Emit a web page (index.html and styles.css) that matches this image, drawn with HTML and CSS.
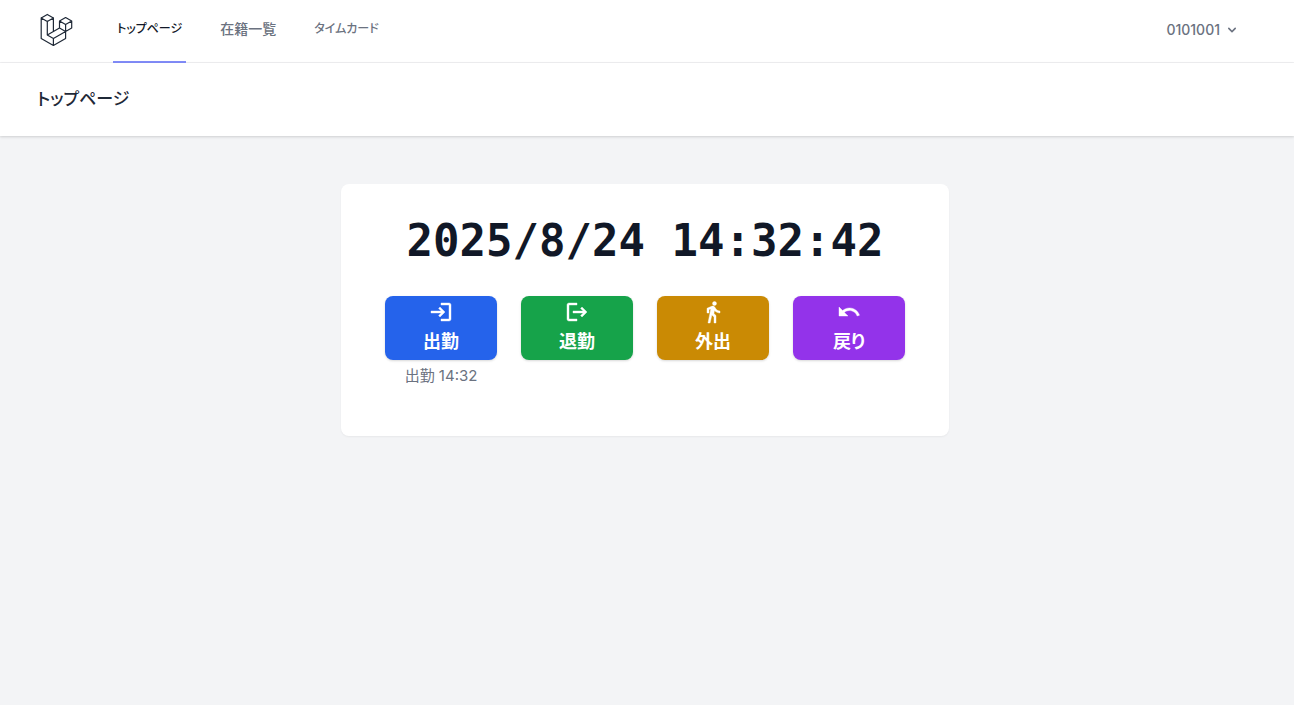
FILE: index.html
```html
<!DOCTYPE html>
<html lang="ja">
<head>
<meta charset="utf-8">
<meta name="viewport" content="width=device-width, initial-scale=1">
<title>トップページ</title>
<link rel="stylesheet" href="styles.css">
</head>
<body class="page">
<nav class="nav">
  <div class="container nav-inner">
    <a class="logo" href="#" aria-label="ホーム">
      <svg class="logo-mark" viewBox="37 13 36 36" fill="none" stroke="currentColor" stroke-width="1.2" stroke-linejoin="round" stroke-linecap="round">
        <path d="M47.3 14.4L53.4 17.9L47.3 21.4L41.2 17.9ZM41.2 17.9V38.5L53.4 45.4L65.6 38.5V31.5M47.3 21.4V35L53.4 38.5V45.4M53.4 17.9V31.5M47.3 35L59.5 28L65.6 31.5L53.4 38.5M65.6 17.5L71.7 21L65.6 24.5L59.5 21ZM59.5 21V28M71.7 21V28L65.6 31.5V24.5"/>
      </svg>
    </a>
    <div class="nav-links">
      <a class="nav-link nav-link-kana nav-link-active" href="#" aria-current="page">トップページ</a>
      <a class="nav-link" href="#">在籍一覧</a>
      <a class="nav-link nav-link-kana" href="#">タイムカード</a>
    </div>
    <button class="user" type="button">
      <span>0101001</span>
      <svg class="user-arrow" viewBox="0 0 20 20" fill="currentColor"><path fill-rule="evenodd" clip-rule="evenodd" d="M5.293 7.293a1 1 0 011.414 0L10 10.586l3.293-3.293a1 1 0 111.414 1.414l-4 4a1 1 0 01-1.414 0l-4-4a1 1 0 010-1.414z"/></svg>
    </button>
  </div>
</nav>
<header class="header">
  <div class="container header-inner">
    <h1 class="title">トップページ</h1>
  </div>
</header>
<main class="main">
  <section class="card">
    <time class="clock" datetime="2025-08-24T14:32:42">2025/8/24 14:32:42</time>
    <div class="actions">
      <div class="action">
        <button class="stamp stamp-in" type="button">
          <svg class="stamp-icon" viewBox="0 0 24 24"><path d="M11 7L9.6 8.4l2.6 2.6H2v2h10.2l-2.6 2.6L11 17l5-5zm9 12h-8v2h8c1.1 0 2-.9 2-2V5c0-1.1-.9-2-2-2h-8v2h8z"/></svg>
          <span>出勤</span>
        </button>
        <p class="note">出勤 14:32</p>
      </div>
      <div class="action">
        <button class="stamp stamp-out" type="button">
          <svg class="stamp-icon" viewBox="0 0 24 24"><path d="M17 7l-1.41 1.41L18.17 11H8v2h10.17l-2.58 2.58L17 17l5-5zM4 5h8V3H4c-1.1 0-2 .9-2 2v14c0 1.1.9 2 2 2h8v-2H4z"/></svg>
          <span>退勤</span>
        </button>
      </div>
      <div class="action">
        <button class="stamp stamp-away" type="button">
          <svg class="stamp-icon" viewBox="0 0 24 24"><path d="M13.5 5.5c1.1 0 2-.9 2-2s-.9-2-2-2-2 .9-2 2 .9 2 2 2zM9.8 8.9L7 23h2.1l1.8-8 2.1 2v6h2v-7.5l-2.1-2 .6-3C14.8 12 16.8 13 19 13v-2c-1.9 0-3.5-1-4.3-2.4l-1-1.6c-.4-.6-1-1-1.7-1-.3 0-.5.1-.8.1L6 8.3V13h2V9.6l1.8-.7"/></svg>
          <span>外出</span>
        </button>
      </div>
      <div class="action">
        <button class="stamp stamp-back" type="button">
          <svg class="stamp-icon" viewBox="0 0 24 24"><path d="M12.5 8c-2.65 0-5.05.99-6.9 2.6L2 7v9h9l-3.62-3.62c1.39-1.16 3.16-1.88 5.12-1.88 3.54 0 6.55 2.31 7.6 5.5l2.37-.78C21.08 11.03 17.15 8 12.5 8z"/></svg>
          <span>戻り</span>
        </button>
      </div>
    </div>
  </section>
</main>
</body>
</html>
```
FILE: styles.css
```css
* {
  box-sizing: border-box;
}

.page {
  margin: 0;
  min-height: 100vh;
  background: #f3f4f6;
  color: #111827;
  font-family: Inter, "Noto Sans CJK JP", sans-serif;
  font-size: 16px;
  line-height: 24px;
  font-feature-settings: "palt";
}

.container {
  max-width: 1284px;
  margin: 0 auto;
  padding: 0 36px 0 32px;
}

.nav {
  background: #fff;
  border-bottom: 1px solid #f0f0f2;
}

.nav-inner {
  display: flex;
  height: 62px;
}

.logo {
  display: flex;
  align-items: center;
  color: #1f2937;
}

.logo-mark {
  display: block;
  width: 36px;
  height: 36px;
}

.nav-links {
  display: flex;
  gap: 30px;
  margin-left: 40px;
  margin-bottom: -1px;
}

.nav-link {
  display: flex;
  align-items: center;
  padding: 0 4px 4px;
  border-bottom: 2px solid transparent;
  color: #6b7280;
  font-size: 14px;
  font-weight: 500;
  line-height: 20px;
  text-decoration: none;
}

.nav-link-kana {
  font-size: 12px;
}

.nav-link-active {
  border-bottom-color: #818cf8;
  color: #111827;
}

.user {
  display: flex;
  align-items: center;
  gap: 4px;
  margin-left: auto;
  padding: 0 13px 3px;
  border: 0;
  background: none;
  color: #6b7280;
  font: 500 14px/20px Inter, sans-serif;
}

.user-arrow {
  width: 16px;
  height: 16px;
}

.header {
  position: relative;
  background: #fff;
  box-shadow: 0 1px 3px rgba(0, 0, 0, 0.1), 0 1px 2px rgba(0, 0, 0, 0.06);
}

.header-inner {
  padding-top: 24px;
  padding-bottom: 24px;
}

.title {
  margin: 0;
  color: #1f2937;
  font-size: 17px;
  font-weight: 500;
  line-height: 25px;
}

.main {
  display: flex;
  justify-content: center;
  padding: 48px 4px 48px 0;
}

.card {
  padding: 32px 44px 48px;
  border-radius: 8px;
  background: #fff;
  box-shadow: 0 1px 2px rgba(0, 0, 0, 0.05);
  text-align: center;
}

.clock {
  display: block;
  margin-bottom: 30px;
  font: 700 44px/50px "DejaVu Sans Mono", monospace;
}

.actions {
  display: flex;
  gap: 24px;
}

.stamp {
  display: flex;
  flex-direction: column;
  align-items: center;
  justify-content: flex-start;
  gap: 2px;
  width: 112px;
  height: 64px;
  padding: 4px 0 6px;
  border: 0;
  border-radius: 8px;
  box-shadow: 0 1px 3px rgba(0, 0, 0, 0.1), 0 1px 2px rgba(0, 0, 0, 0.06);
  color: #fff;
  font: 700 18px/28px "Noto Sans CJK JP", sans-serif;
  font-feature-settings: "palt";
}

.stamp-icon {
  flex: none;
  width: 24px;
  height: 24px;
  fill: currentColor;
  stroke: currentColor;
  stroke-width: 0.4;
}

.stamp-in {
  background: #2563eb;
}

.stamp-out {
  background: #16a34a;
}

.stamp-away {
  background: #ca8a04;
}

.stamp-back {
  background: #9333ea;
}

.note {
  margin: 4px 0 0;
  color: #6b7280;
  font-size: 15px;
}
```
